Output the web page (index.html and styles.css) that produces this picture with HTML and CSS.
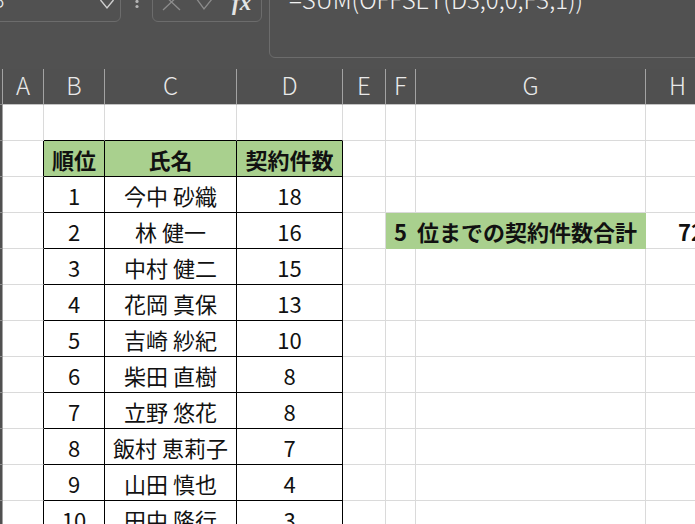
FILE: index.html
```html
<!DOCTYPE html>
<html lang="ja">
<head>
    <meta charset="UTF-8">
    <meta name="viewport" content="width=device-width, initial-scale=1.0">
    <title>契約件数 集計</title>
    <link rel="stylesheet" href="styles.css">
</head>
<body>
    <div class="formula-bar">
        <div class="name-box">
            <span class="cell-ref">G3</span>
            <svg class="chevron" width="16" height="22" viewBox="0 0 16 22">
                <path d="M1.5 11 L8 19 L14.5 11" fill="none" stroke="#cfcfcf" stroke-width="1.4"/>
            </svg>
        </div>
        <svg class="grip" width="6" height="22" viewBox="0 0 6 22">
            <circle cx="3" cy="7.5" r="1.6" fill="#b4b4b4"/>
            <circle cx="3" cy="12.5" r="1.6" fill="#b4b4b4"/>
            <circle cx="3" cy="17.5" r="1.6" fill="#b4b4b4"/>
        </svg>
        <div class="fx-buttons">
            <svg class="btn-cancel" width="20" height="22" viewBox="0 0 20 22">
                <path d="M1 5 L18 21 M18 5 L1 21" fill="none" stroke="#8c8c8c" stroke-width="1.3"/>
            </svg>
            <svg class="btn-enter" width="22" height="22" viewBox="0 0 22 22">
                <path d="M1 9 L9 20 L21 5" fill="none" stroke="#8c8c8c" stroke-width="1.3"/>
            </svg>
            <span class="fx">fx</span>
        </div>
        <div class="formula-input">=SUM(OFFSET(D3,0,0,F3,1))</div>
    </div>

    <table class="sheet">
        <tr class="col-head">
            <th class="rh w-rh"></th>
            <th class="w-a">A</th>
            <th class="w-b">B</th>
            <th class="w-c">C</th>
            <th class="w-d">D</th>
            <th class="w-e">E</th>
            <th class="w-f">F</th>
            <th class="w-g">G</th>
            <th class="w-h">H</th>
        </tr>
        <tr>
            <th class="rh">1</th>
            <td></td><td class="bb"></td><td class="bb"></td><td class="bb"></td><td></td><td></td><td></td><td></td>
        </tr>
        <tr>
            <th class="rh">2</th>
            <td class="lb"></td>
            <td class="t hd">順位</td><td class="t hd">氏名</td><td class="t hd">契約件数</td>
            <td></td><td></td><td></td><td></td>
        </tr>
        <tr>
            <th class="rh">3</th>
            <td class="lb"></td>
            <td class="t">1</td><td class="t">今中 砂織</td><td class="t">18</td>
            <td></td><td></td><td></td><td></td>
        </tr>
        <tr>
            <th class="rh">4</th>
            <td class="lb"></td>
            <td class="t">2</td><td class="t">林 健一</td><td class="t">16</td>
            <td></td>
            <td class="sum-label" colspan="2">5 位までの契約件数合計</td>
            <td class="sum-value">72</td>
        </tr>
        <tr>
            <th class="rh">5</th>
            <td class="lb"></td>
            <td class="t">3</td><td class="t">中村 健二</td><td class="t">15</td>
            <td></td><td></td><td></td><td></td>
        </tr>
        <tr>
            <th class="rh">6</th>
            <td class="lb"></td>
            <td class="t">4</td><td class="t">花岡 真保</td><td class="t">13</td>
            <td></td><td></td><td></td><td></td>
        </tr>
        <tr>
            <th class="rh">7</th>
            <td class="lb"></td>
            <td class="t">5</td><td class="t">吉崎 紗紀</td><td class="t">10</td>
            <td></td><td></td><td></td><td></td>
        </tr>
        <tr>
            <th class="rh">8</th>
            <td class="lb"></td>
            <td class="t">6</td><td class="t">柴田 直樹</td><td class="t">8</td>
            <td></td><td></td><td></td><td></td>
        </tr>
        <tr>
            <th class="rh">9</th>
            <td class="lb"></td>
            <td class="t">7</td><td class="t">立野 悠花</td><td class="t">8</td>
            <td></td><td></td><td></td><td></td>
        </tr>
        <tr>
            <th class="rh">10</th>
            <td class="lb"></td>
            <td class="t">8</td><td class="t">飯村 恵莉子</td><td class="t">7</td>
            <td></td><td></td><td></td><td></td>
        </tr>
        <tr>
            <th class="rh">11</th>
            <td class="lb"></td>
            <td class="t">9</td><td class="t">山田 慎也</td><td class="t">4</td>
            <td></td><td></td><td></td><td></td>
        </tr>
        <tr>
            <th class="rh">12</th>
            <td class="lb"></td>
            <td class="t">10</td><td class="t">田中 隆行</td><td class="t">3</td>
            <td></td><td></td><td></td><td></td>
        </tr>
    </table>
</body>
</html>
```

FILE: styles.css
```css
body {
    margin: 0;
    width: 695px;
    height: 524px;
    overflow: hidden;
    background-color: #ffffff;
    font-family: "Noto Sans CJK JP", "Noto Sans", sans-serif;
}

/* formula bar (top edge is cut off in the screenshot) */
.formula-bar {
    display: flex;
    align-items: flex-start;
    height: 69px;
    background-color: #515151;
}

.formula-bar > * {
    flex-shrink: 0;
}

.name-box {
    display: flex;
    justify-content: space-between;
    box-sizing: border-box;
    width: 161px;
    height: 34px;
    margin-top: -12px;
    margin-left: -40px;
    padding-left: 18px;
    padding-right: 5px;
    border: 1px solid #6c6c6c;
    border-radius: 6px;
}

.cell-ref {
    color: #ededed;
    font-size: 21px;
    font-weight: 300;
    line-height: 21px;
}

.grip {
    margin-top: -11px;
    margin-left: 13px;
}

.fx-buttons {
    display: flex;
    align-items: flex-start;
    box-sizing: border-box;
    width: 110px;
    height: 34px;
    margin-top: -12px;
    margin-left: 12px;
    padding-left: 9px;
    border: 1px solid #6c6c6c;
    border-radius: 6px;
}

.btn-enter {
    margin-left: 13px;
}

.fx {
    margin-left: 15px;
    margin-top: 2px;
    color: #e4e4e4;
    font-family: "Liberation Serif", serif;
    font-style: italic;
    font-weight: bold;
    font-size: 23px;
    line-height: 23px;
}

.formula-input {
    box-sizing: border-box;
    width: 470px;
    height: 89px;
    margin-top: -31px;
    margin-left: 7px;
    padding-left: 19px;
    padding-top: 17px;
    border: 1px solid #6c6c6c;
    border-radius: 6px;
    color: #f2f2f2;
    font-size: 24px;
    font-weight: 300;
    line-height: 24px;
    white-space: nowrap;
}

/* sheet grid */
.sheet {
    table-layout: fixed;
    width: 747px;
    margin-left: -37px;
    border-collapse: separate;
    border-spacing: 0;
}

.sheet th,
.sheet td {
    box-sizing: border-box;
    height: 36px;
    padding: 0;
    text-align: center;
    white-space: nowrap;
    overflow: hidden;
    border-right: 1px solid #dadada;
    border-bottom: 1px solid #dadada;
}

.col-head th {
    background-color: #505050;
    color: #e9e9e9;
    font-size: 24px;
    font-weight: 300;
    line-height: 28px;
    padding-bottom: 4px;
    border-right-color: #a3a3a3;
    border-bottom-color: #c4c4c4;
}

.sheet .rh {
    background-color: #505050;
    color: #e9e9e9;
    font-size: 18px;
    font-weight: 300;
    line-height: 24px;
    border-right-color: #a3a3a3;
    border-bottom-color: #8a8a8a;
}

.w-rh { width: 40px; }
.w-a { width: 41px; }
.w-b { width: 61px; }
.w-c { width: 132px; }
.w-d { width: 106px; }
.w-e { width: 43px; }
.w-f { width: 30px; }
.w-g { width: 230px; }
.w-h { width: 64px; }

.sheet td {
    color: #111111;
    font-size: 22px;
}

.sheet .lb {
    border-right-color: #000000;
}

.sheet .bb {
    border-bottom-color: #000000;
}

.sheet .t {
    border-right-color: #000000;
    border-bottom-color: #000000;
}

.sheet .hd {
    background-color: #a9d08e;
    font-weight: bold;
}

.sheet .sum-label {
    background-color: #a9d08e;
    border-right-color: #a9d08e;
    border-bottom-color: #a9d08e;
    font-weight: bold;
    word-spacing: 5px;
}

.sheet .sum-value {
    text-align: right;
    padding-right: 5px;
    font-weight: bold;
}
```
